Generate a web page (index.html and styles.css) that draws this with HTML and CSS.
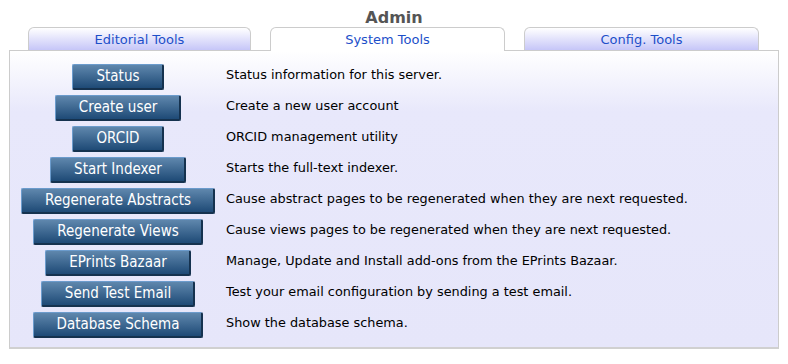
FILE: index.html
```html
<!DOCTYPE html>
<html lang="en">

<head>
    <meta charset="UTF-8">
    <title>Admin</title>
    <link rel="stylesheet" href="styles.css">
</head>

<body>

<h1 class="page-title">Admin</h1>

<div class="tabs">
    <a href="#" class="tab tab-editorial">Editorial Tools</a>
    <a href="#" class="tab tab-current">System Tools</a>
    <a href="#" class="tab tab-config">Config. Tools</a>
</div>

<div class="panel">
    <table class="tools">
        <tr>
            <td class="tool-btn"><button>Status</button></td>
            <td class="tool-desc">Status information for this server.</td>
        </tr>
        <tr>
            <td class="tool-btn"><button>Create user</button></td>
            <td class="tool-desc">Create a new user account</td>
        </tr>
        <tr>
            <td class="tool-btn"><button>ORCID</button></td>
            <td class="tool-desc">ORCID management utility</td>
        </tr>
        <tr>
            <td class="tool-btn"><button>Start Indexer</button></td>
            <td class="tool-desc">Starts the full-text indexer.</td>
        </tr>
        <tr>
            <td class="tool-btn"><button>Regenerate Abstracts</button></td>
            <td class="tool-desc">Cause abstract pages to be regenerated when they are next requested.</td>
        </tr>
        <tr>
            <td class="tool-btn"><button>Regenerate Views</button></td>
            <td class="tool-desc">Cause views pages to be regenerated when they are next requested.</td>
        </tr>
        <tr>
            <td class="tool-btn"><button>EPrints Bazaar</button></td>
            <td class="tool-desc">Manage, Update and Install add-ons from the EPrints Bazaar.</td>
        </tr>
        <tr>
            <td class="tool-btn"><button>Send Test Email</button></td>
            <td class="tool-desc">Test your email configuration by sending a test email.</td>
        </tr>
        <tr>
            <td class="tool-btn"><button>Database Schema</button></td>
            <td class="tool-desc">Show the database schema.</td>
        </tr>
    </table>
</div>

</body>

</html>
```

FILE: styles.css
```css
* {
    box-sizing: border-box;
    font-family: 'DejaVu Sans', Verdana, sans-serif;
}

body {
    margin: 0;
    padding: 8px 9px 0 9px;
    background-color: #ffffff;
    color: #000;
}

.page-title {
    margin: 0;
    text-align: center;
    font-size: 16px;
    font-weight: bold;
    color: #555555;
    line-height: 19px;
}

/* TABS */
.tabs {
    display: flex;
    padding-left: 19px;
    height: 23px;
}

.tab {
    height: 23px;
    line-height: 23px;
    text-align: center;
    font-size: 13px;
    color: #1d4fc9;
    text-decoration: none;
    border: 1px solid #cccccc;
    border-bottom: none;
    border-radius: 6px 6px 0 0;
    background: linear-gradient(to bottom, #ffffff, #c6c6f8);
}

.tab-editorial {
    width: 223px;
}

.tab-current {
    width: 235px;
    height: 24px;
    margin-left: 19px;
    margin-bottom: -1px;
    background: #ffffff;
    position: relative;
    z-index: 1;
}

.tab-config {
    width: 235px;
    margin-left: 19px;
}

/* PANEL */
.panel {
    width: 770px;
    height: 299px;
    border: 1px solid #cccccc;
    border-bottom: 2px solid #d0d0d0;
    background: linear-gradient(to bottom, #ffffff 0px, #e8e8fb 60px, #e6e6fa 100%);
    padding: 9px 0 0 0;
}

.tools {
    border-collapse: separate;
    border-spacing: 0 5px;
    margin-top: -1px;
}

.tool-btn {
    width: 208px;
    text-align: center;
    padding: 0 0 0 8px;
}

.tool-desc {
    padding: 0 0 5px 8px;
    font-size: 12.85px;
    white-space: nowrap;
    vertical-align: middle;
}

.tool-btn button {
    height: 26px;
    padding: 0 22px 1px 23px;
    font-family: 'DejaVu Sans Condensed', 'DejaVu Sans', sans-serif;
    font-stretch: condensed;
    font-size: 15px;
    color: #ffffff;
    border-style: solid;
    border-width: 1px 2px 2px 1px;
    border-color: #6b9bcc #15324f #15324f #6b9bcc;
    border-radius: 2px;
    background: linear-gradient(to bottom, #5f87ad, #1e4a76);
    cursor: pointer;
    vertical-align: middle;
}
```
